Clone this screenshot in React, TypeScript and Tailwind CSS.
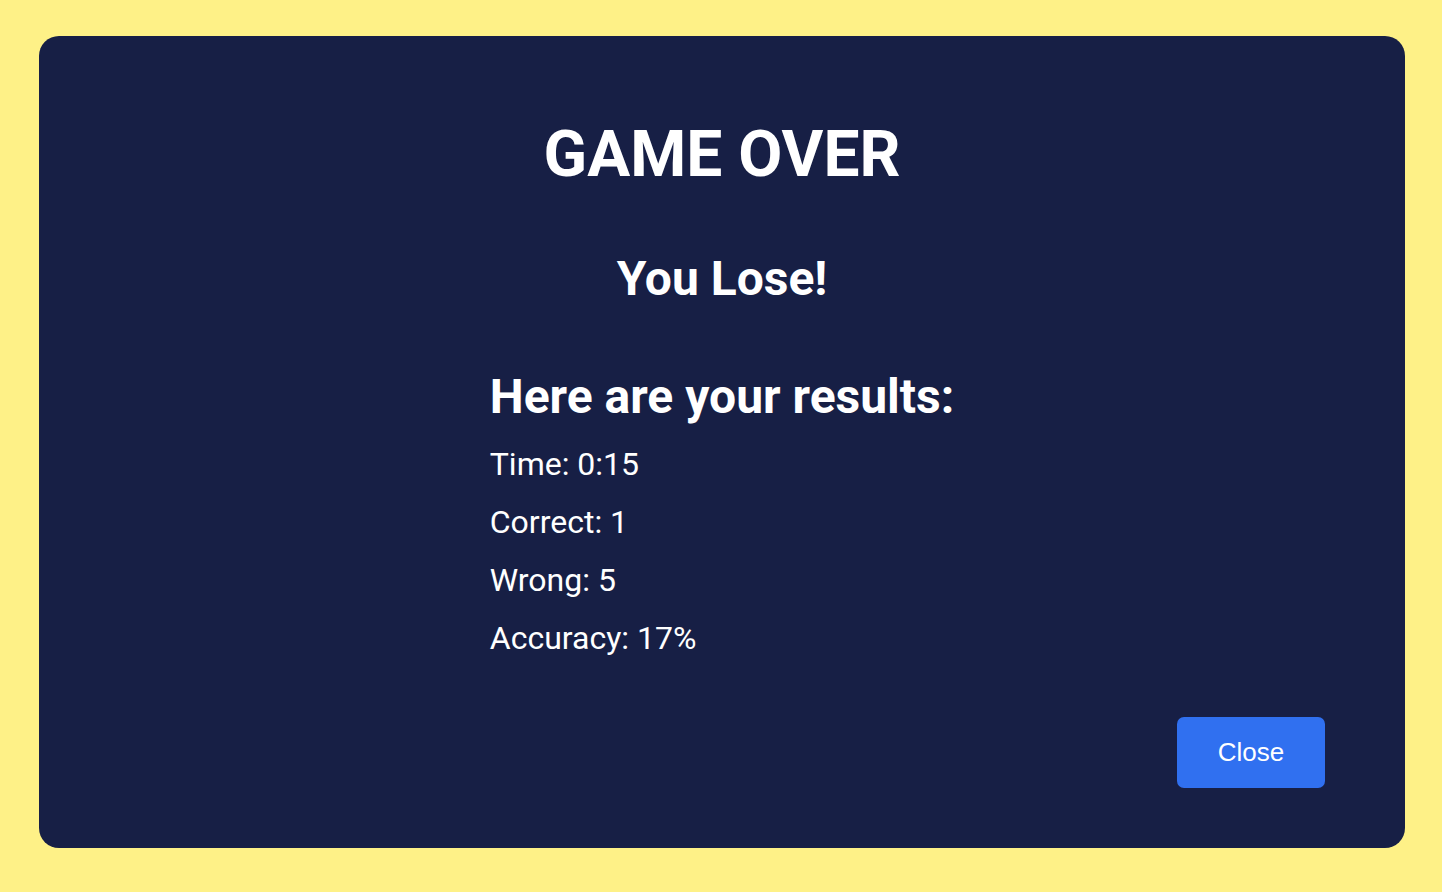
export default function App() {
  const results = [
    { label: "Time", value: "0:15" },
    { label: "Correct", value: "1" },
    { label: "Wrong", value: "5" },
    { label: "Accuracy", value: "17%" },
  ];

  return (
    <div className="h-[892px] w-full bg-[#fef187] pt-[36px] pb-[44px] pl-[39px] pr-[37px] font-['Roboto',sans-serif]">
      {/* Modal */}
      <div className="flex h-full flex-col items-center rounded-[20px] bg-[#171f45] pt-[79px] text-white">
        <h1 className="text-[64px] font-bold leading-[80px]">GAME OVER</h1>

        <h2 className="mt-[56px] text-[48px] font-bold leading-[56px]">You Lose!</h2>

        <div className="mt-[62px] flex flex-col">
          <h3 className="text-[48px] font-bold leading-[56px]">Here are your results:</h3>
          <div className="mt-[10px] flex flex-col">
            {results.map((r) => (
              <p key={r.label} className="text-[32px] leading-[58px]">
                {r.label}: {r.value}
              </p>
            ))}
          </div>
        </div>

        <div className="mt-auto mb-[60px] flex w-full justify-end pr-[80px]">
          <button className="h-[71px] w-[148px] rounded-[7px] bg-[#3070f0] font-['Liberation_Sans',sans-serif] text-[26px] text-white">
            Close
          </button>
        </div>
      </div>
    </div>
  );
}
